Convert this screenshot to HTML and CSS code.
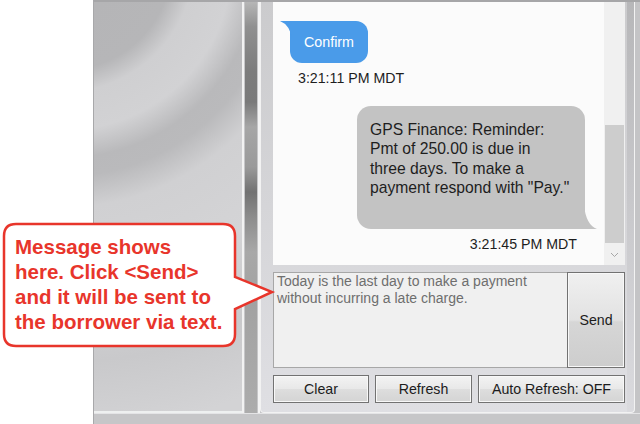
FILE: index.html
```html
<!DOCTYPE html>
<html>
<head>
<meta charset="utf-8">
<link rel="stylesheet" href="styles.css">
</head>
<body>
<div class="window">
  <div class="main">
    <div class="left-pane"></div>
    <div class="splitter"><div class="splitter-bar"></div></div>
    <div class="right-pane">
      <div class="chat">
        <div class="messages">
          <div class="bubble bubble-blue">Confirm<svg class="tail tail-blue" width="12" height="18" viewBox="0 0 12 18"><path d="M0 0 H12 V18 Q10 4 0 0 Z" fill="#4a9be9"/></svg></div>
          <div class="stamp stamp-in">3:21:11 PM MDT</div>
          <div class="bubble bubble-grey">GPS Finance: Reminder:<br>Pmt of 250.00 is due in<br>three days. To make a<br>payment respond with "Pay."<svg class="tail tail-grey" width="13" height="24" viewBox="0 0 13 24"><path d="M0 0 Q2 20 13 24 H0 Z" fill="#c3c3c3"/></svg></div>
          <div class="stamp stamp-out">3:21:45 PM MDT</div>
        </div>
        <div class="scrollbar">
          <div class="track"><div class="thumb"></div></div>
          <div class="arrow"><svg width="9" height="6" viewBox="0 0 9 6"><polyline points="1,1 4.5,4.5 8,1" fill="none" stroke="#a6a6a6" stroke-width="1"/></svg></div>
        </div>
      </div>
      <div class="compose">
        <div class="input">Today is the last day to make a payment<br>without incurring a late charge.</div>
        <button class="btn send">Send</button>
      </div>
      <div class="actions">
        <button class="btn btn-clear">Clear</button>
        <button class="btn btn-refresh">Refresh</button>
        <button class="btn btn-auto">Auto Refresh: OFF</button>
      </div>
    </div>
  </div>
  <div class="strip"></div>
</div>
<div class="callout">
  <svg class="callout-shape" width="280" height="360" viewBox="0 0 280 360"><path d="M16 224 H223 Q235 224 235 236 V277 L272 292 L235 309 V334 Q235 346 223 346 H16 Q4 346 4 334 V236 Q4 224 16 224 Z" fill="#ffffff" stroke="#e8352b" stroke-width="2.5"/></svg>
  <div class="callout-text">Message shows<br>here. Click &lt;Send&gt;<br>and it will be sent to<br>the borrower via text.</div>
</div>
</body>
</html>
```

FILE: styles.css
```css
html, body {
  margin: 0;
  padding: 0;
}
body {
  width: 640px;
  height: 424px;
  overflow: hidden;
  background: #ffffff;
  font-family: "Liberation Sans", Arial, sans-serif;
  position: relative;
}
.window {
  margin-left: 93px;
  width: 546px;
  height: 422px;
  border-left: 1px solid #a8a8aa;
  border-top: 2px solid #a6a6a8;
  background: #c4c4c6;
  display: flex;
  flex-direction: column;
}
.main {
  height: 411px;
  display: flex;
}
.left-pane {
  width: 148px;
  box-sizing: border-box;
  border-bottom: 2px solid #eef0f0;
  background: radial-gradient(circle at -30px -40px, #b4b4b6 0, #b6b6b8 108px, #cfcfd1 130px, #d2d2d4 168px, #b9b9bb 196px, #bababc 214px, #d0d0d2 245px, #d4d4d6 320px, #c9c9cb 400px, #d3d3d5 470px);
}
.splitter {
  width: 18px;
  display: flex;
  justify-content: center;
  background: linear-gradient(to right, #f2f2f2 0 2px, #c6c6c8 2px 16px, #f4f4f4 16px);
}
.splitter-bar {
  width: 12px;
  background: linear-gradient(to bottom, #b6b6b6 0, #909090 25px, #7c7c7c 70px, #7a7a7a 100px, #a6a6a6 125px, #9a9a9a 165px, #727272 190px, #8c8c8c 215px, #a8a8a8 250px, #a2a2a2 300px, #acacac 411px);
}
.right-pane {
  width: 375px;
  box-sizing: border-box;
  border: 1px solid #f2f2f2;
  border-top: none;
  border-radius: 0 0 4px 4px;
  padding: 0 9px 9px 12px;
  display: flex;
  flex-direction: column;
  background: linear-gradient(to bottom, #b7b7b9, #dadade) right 0 top 0 / 7px 100% no-repeat, linear-gradient(to bottom, #cbcbcd, #dfdfe3);
}
.chat {
  height: 263px;
  display: flex;
  background: #fbfbfb;
}
.messages {
  flex: 1;
  display: flex;
  flex-direction: column;
  align-items: flex-start;
  color: #1e1e1e;
}
.bubble {
  position: relative;
  box-sizing: border-box;
}
.bubble-blue {
  margin: 19px 0 0 17px;
  width: 78px;
  height: 42px;
  line-height: 42px;
  text-align: center;
  font-size: 14.3px;
  color: #ffffff;
  background: #4a9be9;
  border-radius: 0 12px 12px 12px;
}
.tail {
  position: absolute;
  display: block;
}
.tail-blue {
  left: -10px;
  top: 0;
}
.bubble-grey {
  margin: 20px 0 0 84px;
  width: 228px;
  height: 123px;
  padding: 14px 13px;
  font-size: 15.7px;
  line-height: 19.3px;
  background: #c3c3c3;
  border-radius: 14px 14px 0 14px;
}
.tail-grey {
  right: -12px;
  bottom: 0;
}
.stamp {
  font-size: 14.2px;
  line-height: 16px;
  margin-top: 7px;
}
.stamp-in {
  margin-left: 25px;
}
.stamp-out {
  align-self: flex-end;
  margin-right: 27px;
}
.scrollbar {
  width: 21px;
  display: flex;
  flex-direction: column;
  background: #f0f0f0;
}
.track {
  flex: 1;
  padding-top: 123px;
}
.thumb {
  height: 118px;
  margin: 0 1px;
  background: #cdcdcd;
}
.arrow {
  height: 20px;
  display: flex;
  align-items: center;
  justify-content: center;
}
.arrow svg {
  display: block;
}
.compose {
  margin-top: 7px;
  height: 96px;
  display: flex;
}
.input {
  flex: 1;
  box-sizing: border-box;
  border: 1px solid #a7a7a7;
  background: #f0f0f0;
  padding: 0 3px;
  font-size: 14px;
  line-height: 17px;
  color: #6e6e6e;
}
.btn {
  font-family: "Liberation Sans", Arial, sans-serif;
  font-size: 14.2px;
  color: #1c1c1c;
  border: 1px solid #727272;
  background: linear-gradient(to bottom, #f3f3f3, #e8e8e8 50%, #dddddd 52%, #d4d4d4);
  box-shadow: inset 0 0 0 1px #f8f8f8;
  padding: 0;
  margin: 0;
  box-sizing: border-box;
}
.send {
  width: 58px;
  margin-left: -1px;
  background: linear-gradient(to bottom, #f0f0f0, #e2e2e2 50%, #d6d6d6 52%, #cdcdcd);
}
.actions {
  margin-top: 7px;
  height: 28px;
  display: flex;
  gap: 6px;
}
.btn-clear {
  width: 96px;
}
.btn-refresh {
  width: 97px;
}
.btn-auto {
  flex: 1;
}
.strip {
  flex: 1;
  border-top: 1px solid #e4e4e6;
  background: #c6c6c8;
}
.callout {
  position: absolute;
  left: 0;
  top: 0;
  width: 280px;
  height: 360px;
}
.callout-shape {
  position: absolute;
  left: 0;
  top: 0;
  display: block;
}
.callout-text {
  position: absolute;
  left: 15px;
  top: 234px;
  font-size: 20.5px;
  line-height: 25px;
  font-weight: bold;
  color: #e8352b;
  white-space: nowrap;
}
```
